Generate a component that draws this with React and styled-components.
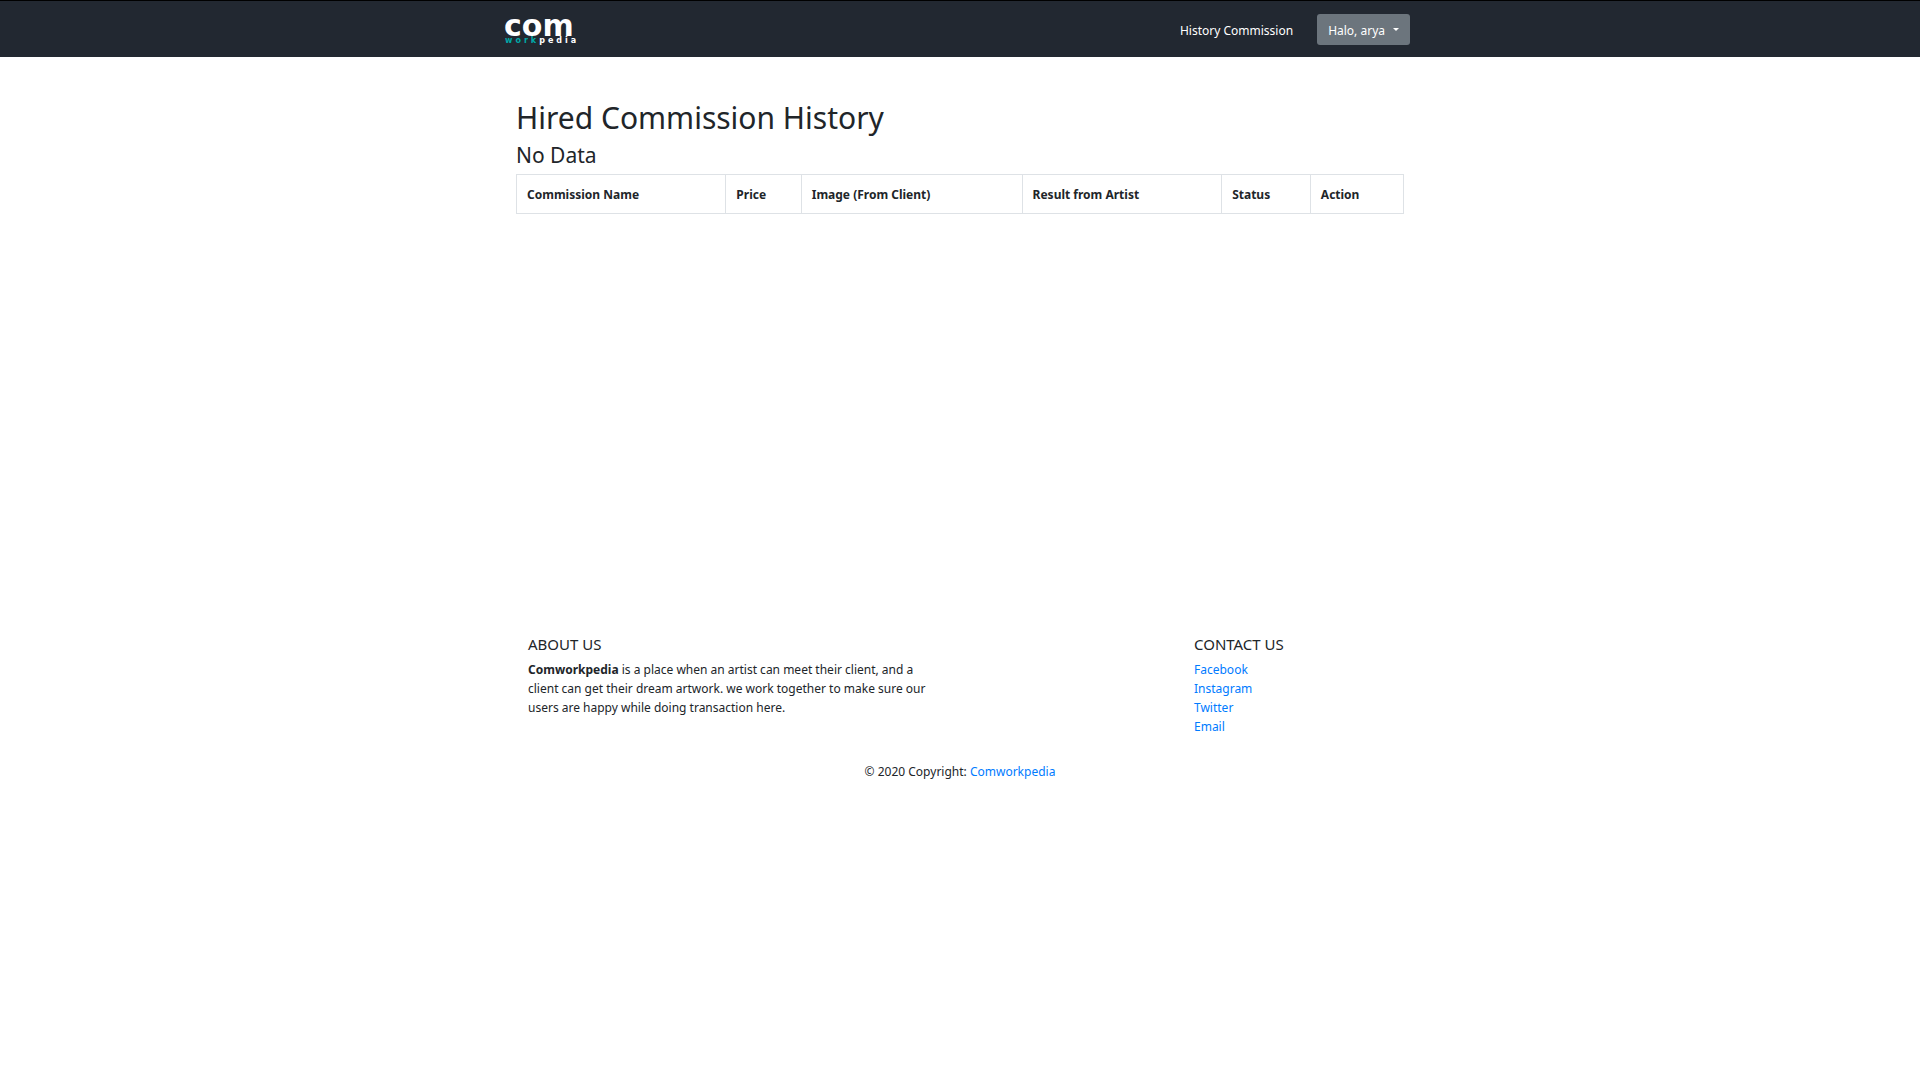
import React from "react";
import styled, { createGlobalStyle } from "styled-components";

const GlobalStyle = createGlobalStyle`
  *, *::before, *::after { box-sizing: border-box; }
  body {
    margin: 0;
    background: #fff;
    color: #212529;
    font-family: "Noto Sans", "Open Sans", sans-serif;
    font-size: 12px;
    line-height: 19px;
  }
`;

const Container = styled.div`
  width: 100%;
  max-width: 912px;
  margin: 0 auto;
`;

const Navbar = styled.header`
  background: #222831;
  border-top: 1px solid #000;
  padding: 13px 0 12px;
`;

const NavContent = styled(Container)`
  display: flex;
  align-items: center;
  justify-content: space-between;
  padding-right: 6px;
`;

const Brand = styled.a`
  display: block;
  height: 31px;

  svg {
    display: block;
    overflow: visible;
  }
`;

const Nav = styled.nav`
  display: flex;
  align-items: center;
  gap: 24px;
`;

const NavLink = styled.a`
  padding-top: 2px;
  color: #fff;
  text-decoration: none;
`;

const UserButton = styled.button`
  display: flex;
  align-items: center;
  gap: 8px;
  height: 31px;
  padding: 2px 11px 0;
  border: 0;
  border-radius: 3px;
  background: #6c757d;
  color: #fff;
  font: inherit;
  cursor: pointer;

  &::after {
    content: "";
    margin-bottom: 2px;
    border-top: 3px solid #fff;
    border-left: 3px solid transparent;
    border-right: 3px solid transparent;
  }
`;

const Main = styled(Container).attrs({ as: "main" })`
  min-height: 564px;
  padding: 42px 12px 0;
`;

const Title = styled.h1`
  margin: 0 0 5px;
  font-size: 30px;
  font-weight: 400;
  line-height: 38px;
`;

const Subtitle = styled.h3`
  margin: 0 0 6px;
  font-size: 21px;
  font-weight: 400;
  line-height: 26px;
`;

const Table = styled.table`
  width: 100%;
  table-layout: fixed;
  border-collapse: collapse;
`;

const HeadCell = styled.th`
  width: ${(p) => p.$share}%;
  padding: 10px 9px 9px 10px;
  border: 1px solid #dee2e6;
  text-align: left;
  font-weight: 700;
`;

const Footer = styled(Container).attrs({ as: "footer" })`
  padding: 14px 12px;
`;

const FooterColumns = styled.div`
  display: grid;
  grid-template-columns: 2fr 1fr 1fr;
`;

const FooterColumn = styled.section`
  grid-column: ${(p) => p.$column};
  padding: 0 18px 0 12px;
`;

const FooterTitle = styled.h5`
  margin: 0 0 6px;
  font-size: 15px;
  font-weight: 400;
  line-height: 19px;
  text-transform: uppercase;
`;

const Paragraph = styled.p`
  margin: 0;
`;

const LinkList = styled.ul`
  list-style: none;
  margin: 0;
  padding: 0;
`;

const Link = styled.a`
  color: #007bff;
  text-decoration: none;
`;

const Copyright = styled.div`
  padding-top: 26px;
  text-align: center;
`;

const columns = [
  { name: "Commission Name", share: 23.6 },
  { name: "Price", share: 8.5 },
  { name: "Image (From Client)", share: 24.9 },
  { name: "Result from Artist", share: 22.5 },
  { name: "Status", share: 10 },
  { name: "Action", share: 10.5 },
];

const contacts = ["Facebook", "Instagram", "Twitter", "Email"];

function Logo() {
  return (
    <svg width="78" height="31" viewBox="0 0 78 31" role="img" aria-label="Comworkpedia">
      <g fontFamily="'DejaVu Sans', sans-serif" fill="#fff">
        <text x="0" y="22" fontSize="30" fontWeight="700">com</text>
        <text x="1" y="29" fontSize="8" fontWeight="700" letterSpacing="3">
          <tspan fill="#00a8a8">work</tspan>
          <tspan>pedia</tspan>
        </text>
      </g>
    </svg>
  );
}

export default function App() {
  return (
    <>
      <GlobalStyle />
      <Navbar>
        <NavContent>
          <Brand href="#"><Logo /></Brand>
          <Nav>
            <NavLink href="#history">History Commission</NavLink>
            <UserButton type="button" aria-haspopup="menu">Halo, arya</UserButton>
          </Nav>
        </NavContent>
      </Navbar>
      <Main>
        <Title>Hired Commission History</Title>
        <Subtitle>No Data</Subtitle>
        <Table>
          <thead>
            <tr>
              {columns.map((c) => (
                <HeadCell key={c.name} scope="col" $share={c.share}>{c.name}</HeadCell>
              ))}
            </tr>
          </thead>
        </Table>
      </Main>
      <Footer>
        <FooterColumns>
          <FooterColumn $column={1}>
            <FooterTitle>About us</FooterTitle>
            <Paragraph>
              <strong>Comworkpedia</strong> is a place when an artist can meet their client, and a
              client can get their dream artwork. we work together to make sure our users are happy
              while doing transaction here.
            </Paragraph>
          </FooterColumn>
          <FooterColumn $column={3}>
            <FooterTitle>Contact us</FooterTitle>
            <LinkList>
              {contacts.map((name) => (
                <li key={name}><Link href={`#${name.toLowerCase()}`}>{name}</Link></li>
              ))}
            </LinkList>
          </FooterColumn>
        </FooterColumns>
        <Copyright>
          © 2020 Copyright: <Link href="#">Comworkpedia</Link>
        </Copyright>
      </Footer>
    </>
  );
}
